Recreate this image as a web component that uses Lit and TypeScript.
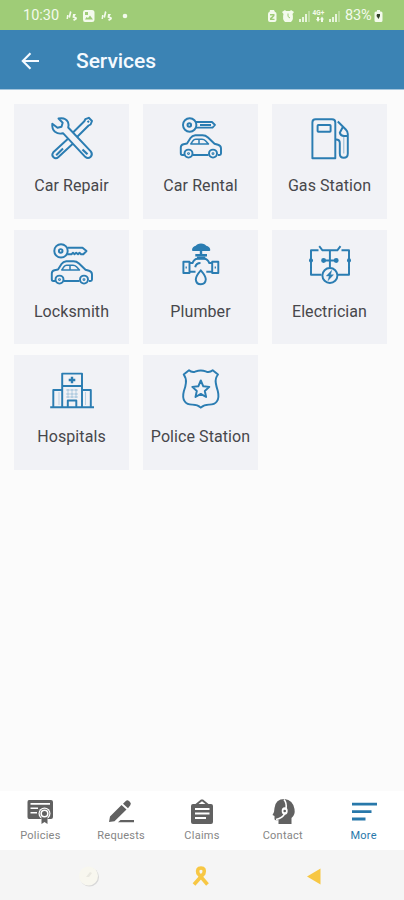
import { LitElement, html, css, svg } from "lit";
import { customElement } from "lit/decorators.js";

const car = svg`
  <path d="M7 41H5.2Q3.8 41 3.8 39.3V33.5Q3.8 31 6.5 30.3L10 29.5L13.5 24Q15.2 21.5 18.3 21.3H25.5Q28.5 21.3 31 23.5L37.5 29.7L41 30.8Q44 31.7 44 34.5V39.5Q44 41 42.5 41H41M16 41H31.5"/>
  <path d="M13.8 30L16 26.7Q17 25.3 18.7 25.3H25Q27 25.3 28.5 26.7L31.5 30ZM22 25.5V30" stroke-width="1.5"/>
  <circle cx="11.5" cy="39.6" r="4"/><circle cx="36" cy="39.6" r="4"/>
  <circle cx="11.5" cy="39.6" r=".5"/><circle cx="36" cy="39.6" r=".5"/>`;

const services = [
  { name: "Car Repair", icon: svg`
    <path d="M24 19.5L36.3 7.2L37.3 5.2L40.8 3.8L44 7L42.6 10.5L40.6 11.5L28.3 23.8M20 24.8L5.3 38.2Q3.3 41 5.3 43Q7.8 45.5 10.5 43L24.8 29.8M39.5 8.3L41 7"/>
    <path d="M8.2 41.2L15 34.5" stroke-width="2"/>
    <path class="fill" d="M4.3 9.8L9.5 13.8L13.5 12.8L14.7 8.7L10.5 4.5Q17.5 3 20 8.2Q21 10.8 20.2 13.5L42.8 37.3Q45 40.3 42.7 42.8Q40 45.3 37.2 42.8L15 19.2Q10.5 20.5 7 17.8Q3.8 15 4.3 9.8Z"/>
    <path d="M34.5 35.5L39.5 40.3" stroke-width="2.2"/>` },
  { name: "Car Rental", icon: svg`
    <circle cx="12.7" cy="11" r="6.7"/><circle cx="12.3" cy="11" r="1.8"/>
    <path d="M19 8H35L38 11L35.5 13.7H19M23 11H34" stroke-width="1.8"/>
    <g>${car}</g>` },
  { name: "Gas Station", icon: svg`
    <path d="M6.4 44.3V8.5Q6.4 5.3 9.6 5.3H26Q29.3 5.3 29.3 8.5V44.3Z"/>
    <rect x="11.6" y="11" width="13" height="6.7" rx=".7"/>
    <path d="M31.8 7.5L39.8 15.5Q41.8 17.5 41.8 20V39.5Q41.8 43.8 37.8 43.8Q33.8 43.8 33.8 39.5V29Q33.8 25.5 30 25.5M36.7 13.2L33.8 18.8Q34.5 22 38 22H41.3"/>
    <path d="M37.8 23V39.500" stroke-width="1" opacity=".5"/>` },
  { name: "Locksmith", icon: svg`
    <circle cx="13" cy="10.9" r="6.7"/><circle cx="12.7" cy="10.9" r="1.8"/>
    <path d="M19.3 7.7H34.5L38.5 11L35.3 14.2H33L31.5 12.8L30 14.2L28.2 12.8L26.5 14.2L25 12.8L23.5 14.2H19.3"/>
    <g>${car}</g>` },
  { name: "Plumber", icon: svg`
    <path class="solid" d="M16 10Q16 7.500 19.5 6.5Q20.5 4.500 24 4.500Q27.5 4.500 28.5 6.5Q32.3 7.500 32.3 10Z"/>
    <path d="M24 10V15M18.3 15.3H30M20 18H28.3" stroke-width="2.4"/>
    <path d="M18.5 31.8H12.5V33H6.4V21.8H12.5V23H15.5Q17.3 18.7 20.5 18.7H27.2Q30.5 18.7 32.3 23H35.2V21.8H41.3V33H35.2V31.8H29.3M12.5 23V32M35.2 23V32M18.2 27.3Q19 23 23.5 23"/>
    <path d="M9.2 26.5V28.5M38.3 26.5V28.5" stroke-width="1.3"/>
    <path class="fill" d="M23.8 30.3Q18.8 36 18.8 39.3Q19.2 44.3 23.8 44.3Q28.5 44.3 28.8 39.3Q28.8 36 23.8 30.3Z"/>` },
  { name: "Electrician", icon: svg`
    <path d="M12.5 10.3H5V34.7H15.5M35.5 10.3H43V34.7H32M13.2 6.2L16.5 10.3H31.3L34.5 6.2M23.9 10.5V27.5M17.5 20.5H30.5"/>
    <g class="solid"><circle cx="17.6" cy="20.4" r="1.5"/><circle cx="30.2" cy="20.4" r="1.5"/><circle cx="5" cy="20.4" r="1.1"/><circle cx="43" cy="20.4" r="1.1"/></g>
    <circle class="fill" cx="23.9" cy="35.5" r="7.5"/><path class="solid" d="M25.7 30.3L20.3 36H23.2L22 40.7L27.5 34.7H24.6Z" stroke-width=".4"/>` },
  { name: "Hospitals", icon: svg`
    <path d="M2.2 42.2H46M5.3 42V25H14.2M34 25H42.8V42M14.2 42V8.6H34V42M14.2 21H34M19.8 42V35.5H28.3V42"/>
    <path d="M24 11.7V18.3M20.7 15H27.3" stroke-width="2.4"/>
    <path d="M18 25H30M18 29H30M18 32H30M20 24V33M24 24V33M28 24V33" stroke-width=".7" opacity=".45"/>
    <path d="M11 27V40M37.5 27V40" stroke-width=".7" opacity=".4"/>` },
  { name: "Police Station", icon: svg`
    <path d="M12 5.3Q14.500 7.500 18 6.700Q21.500 5.400 23.8 5.400Q26 5.400 29.500 6.700Q33 7.500 35.7 5.3L41 9.5Q38 13.2 38.8 18Q39.3 21.5 40.8 26Q42.5 33 39.8 36.5Q37.5 39.7 32 39.6Q27 39.6 23.8 42.6Q20.7 39.6 15.5 39.6Q10 39.7 7.8 36.5Q5 33 6.9 26Q8.6 21.5 8.9 18Q9.5 13.2 6.7 9.5Z"/>
    <path d="M23.8 15.5L26.3 21.3L32.3 21.9L27.8 26L29.1 32L23.8 28.9L18.5 32L19.8 26L15.3 21.9L21.3 21.3Z"/>` },
];

const tabs = [
  { name: "Policies", icon: svg`<path fill-rule="evenodd" d="M3 2H25Q27 2 27 4V19Q27 21 25 21H3Q1.500 21 1.500 19V4Q1.500 2 3 2ZM4.500 5V6.700H24V5ZM4.500 9.500V11H12V9.500ZM4.500 14V15.500H11V14Z"/><circle class="cut" cx="18.500" cy="15.500" r="6"/><path d="M15.500 19H21.500V26L18.500 24L15.500 26Z"/><circle cx="18.500" cy="15.500" r="4.800"/><circle class="line" cx="18.500" cy="15.500" r="3.300" stroke-width=".6"/>` },
  { name: "Requests", icon: svg`<path d="M2 24L3 18.500L14.500 7L19.500 11.500L7.500 23.200ZM16 5.700L18.800 3Q20.300 1.600 22 3L23 4Q24.600 5.500 23.300 7.200L21 10.200ZM13.500 22H27V24.200H11Z"/>` },
  { name: "Claims", icon: svg`<path fill-rule="evenodd" d="M5 6H7.500L13 1.500H15L20.500 6H23Q25 6 25 8V24Q25 26 23 26H5Q3 26 3 24V8Q3 6 5 6ZM10.500 6H17.500L14 3.200ZM7 10V12H21.500V10ZM7 14.500V16.500H21.500V14.500ZM7 19V21H18V19Z"/>` },
  { name: "Contact", icon: svg`<path d="M7 26V20Q3 17 4 11Q5.500 2 14 1Q23 1 24 10L24.500 14L26 17L24 18V21Q24 23 20 22V26Z" transform="translate(29.500 0) scale(-1 1)"/><path class="line" d="M15 1.500Q18 5 17 11M16 15Q14 20 7 21.500"/><ellipse class="cut" cx="15.700" cy="13" rx="3" ry="3.700"/><circle cx="15.700" cy="13" r="1.300"/>` },
  { name: "More", active: true, icon: svg`<path d="M2 4.700H27V7.500H2ZM2 12.200H21.500V15H2ZM2 19.600H15.500V22.400H2Z"/>` },
];

@customElement("app-root")
export class AppRoot extends LitElement {
  static styles = css`
    :host { display: flex; flex-direction: column; height: 900px; width: 404px; overflow: hidden; background: #fbfbfb; font-family: Roboto, sans-serif; color: #47474b; }
    * { box-sizing: border-box; }
    svg { display: block; flex: none; }
    .status { height: 30px; flex: none; display: flex; align-items: center; padding: 1px 21px 0 23px; background: #9fcc77; color: #f3faec; font-size: 14.5px; }
    .status svg { fill: currentColor; }
    .time { width: 43px; }
    .right { margin-left: auto; display: flex; align-items: center; }
    .percent { margin-left: 4px; width: 29px; letter-spacing: -.2px; }
    header { height: 60px; flex: none; display: flex; align-items: center; padding: 2px 19px 0; background: #3b83b4; border-bottom: 1px solid #a4c5dc; color: #f5faff; }
    header svg { fill: none; stroke: currentColor; stroke-width: 2.1; }
    h1 { margin: 0 0 0 33px; font-size: 21px; font-weight: 500; line-height: 26px; letter-spacing: -.05px; }
    main { flex: 1; padding: 14px 16px 0 14px; }
    .grid { display: grid; grid-template-columns: repeat(3, 115px); grid-auto-rows: 114.500px; gap: 11px 14px; }
    .card { background: #f1f2f6; display: flex; flex-direction: column; align-items: center; padding-top: 10px; }
    .card svg { fill: none; stroke: #2b7db2; stroke-width: 1.95; stroke-linejoin: round; }
    .card .fill { fill: #f1f2f6; }
    .card .solid { fill: #2b7db2; }
    .label { margin-top: 14px; font-size: 16px; line-height: 20px; letter-spacing: .08px; white-space: nowrap; }
    nav { height: 59px; flex: none; display: grid; grid-template-columns: repeat(5, 1fr); background: #fff; color: #616161; padding: 7px 0 0; }
    .tab { display: flex; flex-direction: column; align-items: center; font-size: 11px; line-height: 14px; letter-spacing: .25px; }
    .tab svg { fill: currentColor; }
    .tab span { margin-top: 3px; color: #858585; }
    .active, .tab.active span { color: #2878aa; }
    .cut { fill: #fff; }
    .line { fill: none; stroke: #fff; stroke-width: 1.6; }
    .system { height: 50px; flex: none; display: grid; grid-template-columns: 26px 22px 18px; column-gap: 88px; align-items: center; padding: 2px 0 0 76px; background: #f5f5f5; }
    .system svg:last-child { margin-left: 6px; }
  `;

  signal() {
    return html`<svg width="13" height="14" viewBox="0 0 13 14"><path opacity=".85" d="M1 10H3V13H1ZM4 8H6V13H4ZM7 5H9V13H7Z"/><path opacity=".35" d="M10 2H12V13H10Z"/></svg>`;
  }

  leaf() {
    return html`<svg width="12" height="14" viewBox="0 0 12 14"><path d="M4 2L5.500 3L4 9L2.500 8ZM1 6L2.500 6L2 10H.5ZM7 5H10L8.500 7.500Q12 8 10.500 10.500L8 12L7 10.500L9 9.500L6.500 8.500Z"/></svg>`;
  }

  render() {
    return html`
      <div class="status">
        <span class="time">10:30</span>${this.leaf()}
        <svg width="20" height="14" viewBox="0 0 20 14"><path fill-rule="evenodd" d="M7 1H14Q16.500 1 16.500 3.500V10.500Q16.500 13 14 13H7Q5 13 5 10.500V3.500Q5 1 7 1ZM7 10.500H15L12 6.500L10 9L8.500 8ZM7 3V6H10V3Z"/></svg>
        <svg width="3" height="14"></svg>${this.leaf()}
        <svg width="21" height="14"><circle cx="12" cy="7" r="2.300"/></svg>
        <div class="right">
          <svg width="14" height="14" viewBox="0 0 14 14"><path fill-rule="evenodd" d="M5 1H9L10 3Q11.500 3 11.500 5V11Q11.500 13 9.500 13H5Q3 13 3 11V5Q3 3 4.500 3ZM5 5V6.500H8L5 9V11H9.500V9.800H7L9.500 7V5Z"/></svg>
          <svg width="18" height="14" viewBox="0 0 18 14"><path d="M3 3L6 1L7 2H11L12 1L15 3L13.500 5Q15 10 12 13H6Q3 10 4.500 5Z"/><path d="M9 4.500V7.500L11 9" fill="none" stroke="#9fcc77"/></svg>
          <svg width="1" height="14"></svg>${this.signal()}
          <svg width="17" height="14" viewBox="0 0 17 14"><text x="1.500" y="6" font-size="6.500" font-weight="700">4G+</text><path d="M6 8H8V10H9L7 13L5 10H6ZM10 13V10.500H9L11 7.500L13 10.500H12V13Z"/></svg>
          ${this.signal()}
          <span class="percent">83%</span>
          <svg width="9" height="14" viewBox="0 0 9 14"><path d="M3 1H6V2.500H7Q8.500 2.500 8.500 4V11.500Q8.500 13 7 13H2Q.5 13 .5 11.500V4Q.5 2.500 2 2.500H3Z"/><path fill="#33412a" d="M3 5H6V7L4.500 10L2.500 7Z"/></svg>
        </div>
      </div>
      <header>
        <svg width="24" height="24" viewBox="0 0 24 24"><path d="M20 12H4M11.500 4.300L3.800 12L11.500 19.700"/></svg>
        <h1>Services</h1>
      </header>
      <main><div class="grid">
        ${services.map((s) => html`<div class="card"><svg width="48" height="48" viewBox="0 0 48 48">${s.icon}</svg><span class="label">${s.name}</span></div>`)}
      </div></main>
      <nav>
        ${tabs.map((t) => html`<div class="tab ${t.active ? "active" : ""}"><svg width="28" height="28" viewBox="0 0 28 28">${t.icon}</svg><span>${t.name}</span></div>`)}
      </nav>
      <div class="system">
        <svg width="26" height="26" viewBox="0 0 26 26"><circle cx="13.500" cy="14" r="9.500" fill="#d8d8d8"/><circle cx="12.500" cy="13" r="9.500" fill="#f8f7ef"/><path d="M10 14L14 9L16 10L13 14Z" fill="#e9e8e0"/></svg>
        <svg width="22" height="26" viewBox="0 0 22 26"><path d="M4 21.500L13.800 10.500Q15.500 5 11 5Q6.500 5 8 10.500L17.500 21.500" fill="none" stroke="#f7c744" stroke-width="3.600"/></svg>
        <svg width="18" height="26" viewBox="0 0 18 26"><path d="M1 13.500L14.500 5.500V21.500Z" fill="#f7c744"/></svg>
      </div>`;
  }
}
